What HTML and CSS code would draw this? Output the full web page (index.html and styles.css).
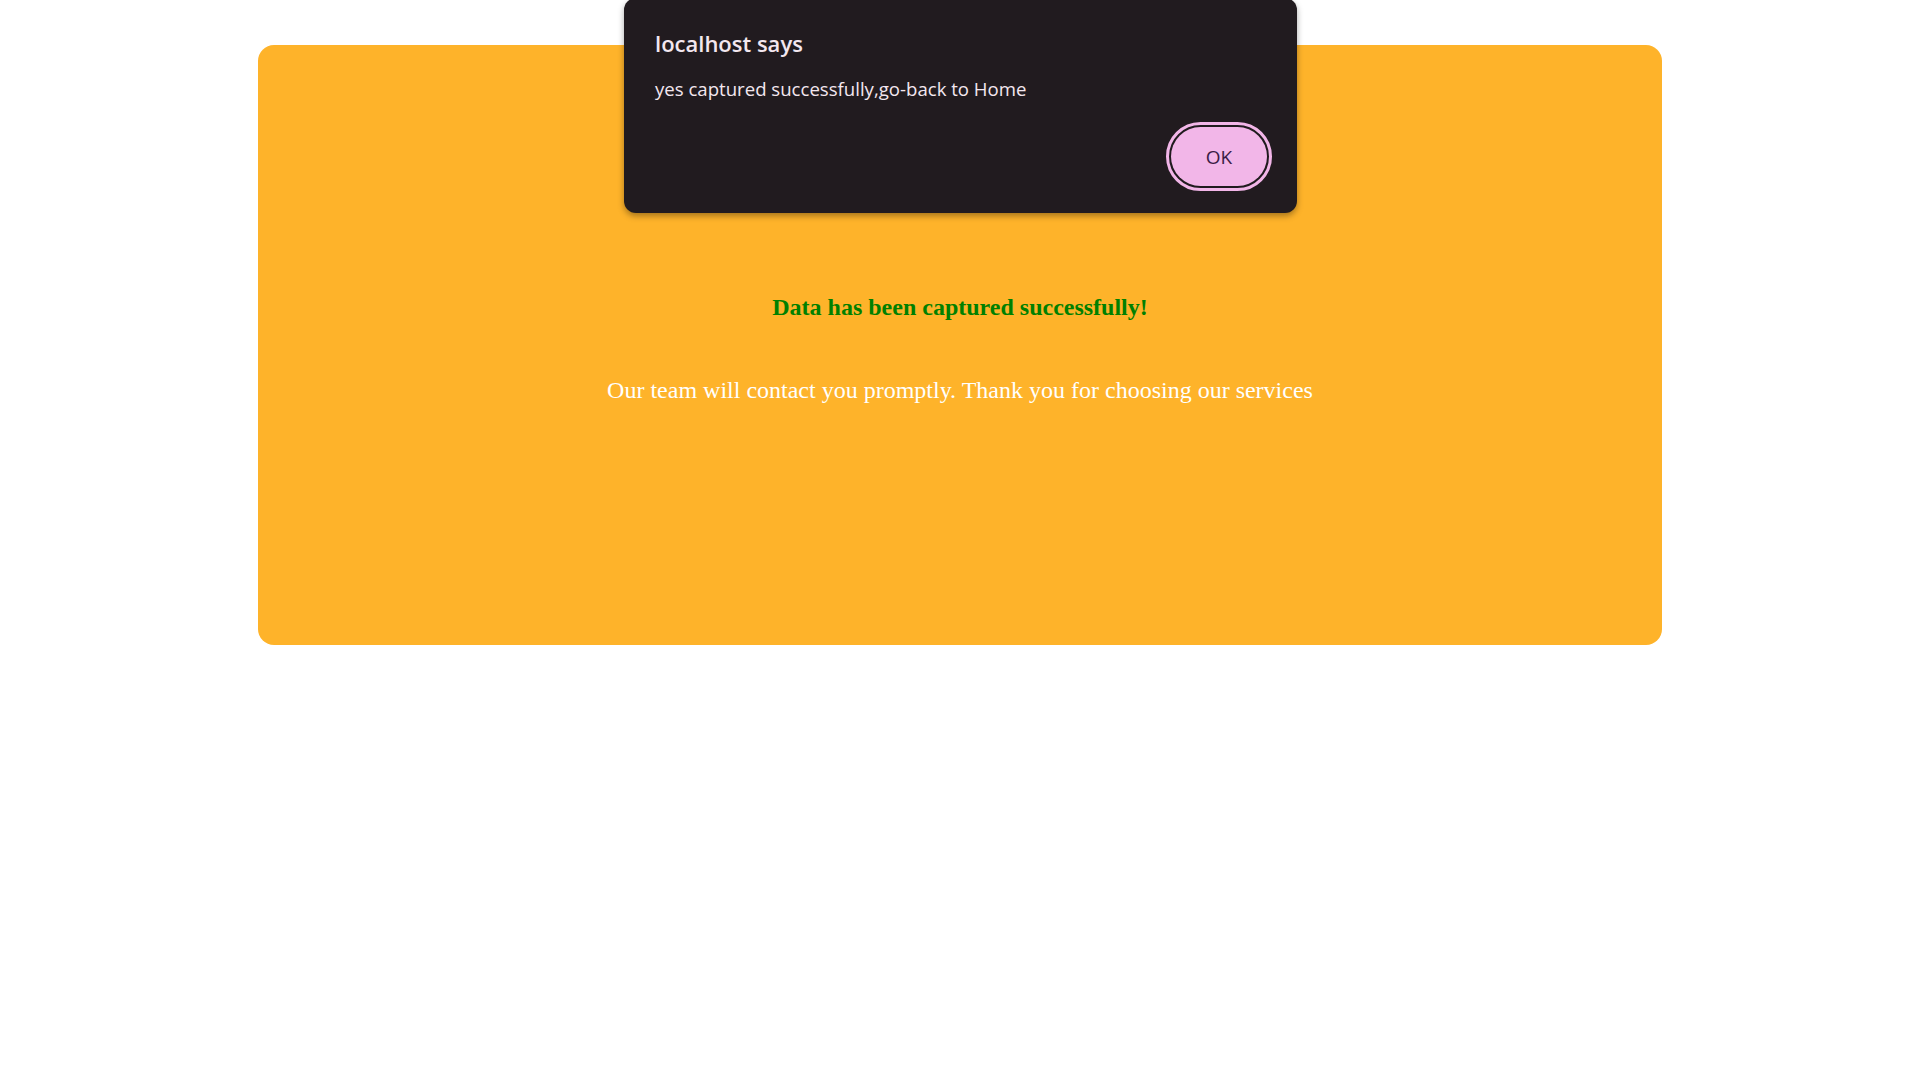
FILE: index.html
```html
<!DOCTYPE html>
<html lang="en">
<head>
<meta charset="utf-8">
<title>Captured</title>
<link rel="stylesheet" href="styles.css">
</head>
<body>
<div class="card">
  <h2 class="success">Data has been captured successfully!</h2>
  <p class="thanks">Our team will contact you promptly. Thank you for choosing our services</p>
</div>
<div class="dialog" role="alertdialog">
  <div class="dialog-title">localhost says</div>
  <div class="dialog-msg">yes captured successfully,go-back to Home</div>
  <div class="dialog-actions">
    <button class="ok-btn">OK</button>
  </div>
</div>
</body>
</html>
```
FILE: styles.css
```css
html, body {
  margin: 0;
  padding: 0;
  background: #ffffff;
}
body {
  font-family: "Liberation Serif", "Times New Roman", serif;
}
.card {
  width: 1404px;
  height: 600px;
  box-sizing: border-box;
  margin: 45px auto 0;
  padding-top: 248px;
  background: #feb32a;
  border-radius: 16px;
  text-align: center;
}
.success {
  margin: 0;
  font-size: 24px;
  font-weight: bold;
  color: #008000;
  line-height: 28px;
}
.thanks {
  margin: 55px 0 0;
  font-size: 24px;
  color: #ffffff;
  line-height: 28px;
}
.dialog {
  position: absolute;
  top: -2px;
  left: 624px;
  width: 673px;
  height: 215px;
  box-sizing: border-box;
  padding: 0 30px 27px 31px;
  background: #211b1f;
  border-radius: 12px;
  box-shadow: 0 3px 6px rgba(0, 0, 0, 0.35);
  font-family: "Open Sans", "Noto Sans", sans-serif;
  display: flex;
  flex-direction: column;
}
.dialog-title {
  margin-top: 30px;
  font-size: 22px;
  font-weight: 600;
  line-height: 30px;
  color: #f3e7ef;
}
.dialog-msg {
  margin-top: 19px;
  font-size: 18.6px;
  line-height: 24px;
  color: #f3e7ef;
}
.dialog-actions {
  margin-top: auto;
  display: flex;
  justify-content: flex-end;
}
.ok-btn {
  width: 96px;
  height: 59px;
  border: none;
  border-radius: 30px;
  background: #f2b6e8;
  color: #3a1c46;
  font-family: "Open Sans", "Noto Sans", sans-serif;
  font-size: 19px;
  outline: 3px solid #f2b6e8;
  outline-offset: 2px;
  padding: 0;
}
```
